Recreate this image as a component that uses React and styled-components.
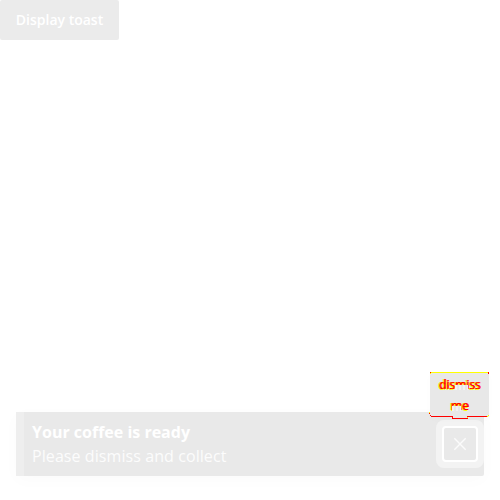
import React from "react";
import styled, { createGlobalStyle } from "styled-components";

const GlobalStyle = createGlobalStyle`
  * { box-sizing: border-box; }
  body { margin: 0; background: #fff; font-family: "Open Sans", "Noto Sans", sans-serif; }
`;

const Page = styled.main`
  display: flex;
  flex-direction: column;
  justify-content: space-between;
  align-items: flex-start;
  width: 500px;
  height: 500px;
  padding-bottom: 24px;
  overflow: hidden;
`;

const TriggerButton = styled.button`
  width: 119px;
  height: 40px;
  padding: 0 0 1px;
  border: 0;
  border-radius: 2px;
  background: #ebebeb;
  color: #fff;
  font: 600 14px/20px "Open Sans", sans-serif;
`;

const Toast = styled.section`
  display: flex;
  justify-content: space-between;
  width: 468px;
  height: 64px;
  margin-left: 16px;
  padding: 8px 0 8px 8px;
  border-left: 8px solid #eeeeee;
  border-radius: 0 2px 2px 0;
  background: #e9e9e9;
  box-shadow: 0 4px 18px rgba(0, 0, 0, 0.018);
`;

const Message = styled.div`
  color: #fff;
  font-size: 16px;
  line-height: 24px;
`;

const Title = styled.div`
  font-weight: 700;
`;

const Detail = styled.div`
  color: #fcfcfc;
  letter-spacing: 0.08px;
`;

const Action = styled.div`
  position: relative;
`;

const CloseButton = styled.button`
  display: grid;
  place-items: center;
  width: 48px;
  height: 48px;
  padding: 0;
  border: 6px solid #f3f3f3;
  border-radius: 8px;
  background: #f3f3f3;
`;

const CloseFace = styled.span`
  display: grid;
  place-items: center;
  width: 36px;
  height: 36px;
  border: 2px solid #fff;
  border-radius: 4px;
  background: #e9e9e9;
`;

const Tooltip = styled.div`
  position: absolute;
  left: -6px;
  top: -48px;
  width: 59px;
  height: 45px;
  border-top: 1px solid #ff0;
  background: #e8e8e8;
  box-shadow: 0 2px 8px rgba(0, 0, 0, 0.015);
  font-size: 12px;
  line-height: 21px;
  text-align: center;
`;

const TooltipEdge = styled.svg`
  position: absolute;
  left: -1px;
  top: -1px;
`;

const TooltipText = styled.span`
  display: block;
  position: relative;
  top: 1px;
  color: #f00;
  font-weight: 400;
  text-shadow: -1px 0 #ff0, 1px 0 #f00, 0 1px #ff0;

  &::after {
    content: "";
    position: absolute;
    left: ${({ $fadeStart }) => $fadeStart}px;
    top: 11px;
    width: ${({ $fadeWidth }) => $fadeWidth}px;
    height: 5px;
    background: repeating-linear-gradient(90deg, #f3f3f3 0 2px, #e8e8e8 2px 4px);
  }
`;

export default function App() {
  return (
    <>
      <GlobalStyle />
      <Page>
        <TriggerButton>Display toast</TriggerButton>
        <Toast>
          <Message>
            <Title>Your coffee is ready</Title>
            <Detail>Please dismiss and collect</Detail>
          </Message>
          <Action>
            <CloseButton aria-label="Dismiss">
              <CloseFace>
                <svg width="14" height="14" viewBox="0 0 14 14">
                  <path d="M1.3 1.3L12.7 12.7M12.7 1.3L1.3 12.7" stroke="#fbfbfb" strokeWidth="1.4" />
                </svg>
              </CloseFace>
            </CloseButton>
            <Tooltip>
              <TooltipEdge width="61" height="47" viewBox="0 0 61 47" shapeRendering="crispEdges">
                <path d="M23 43h15v3H23z" fill="#e8e8e8" />
                <path d="M2 44.5h21M23 46.5h16M39 44.5h19M23.5 44v3M38.5 44v2M0 41.5h1M1 43.5h1M59 1.5h1M1 .5h1M59 .5h1" fill="none" stroke="#f00" />
                <path d="M1 1.5h1M0 40.5h1M59 43.5h1M58 44.5h1M38 45.5h1" fill="none" stroke="#ff0" />
              </TooltipEdge>
              <TooltipText $fadeStart={25} $fadeWidth={13}>dismiss</TooltipText>
              <TooltipText $fadeStart={22} $fadeWidth={9}>me</TooltipText>
            </Tooltip>
          </Action>
        </Toast>
      </Page>
    </>
  );
}
